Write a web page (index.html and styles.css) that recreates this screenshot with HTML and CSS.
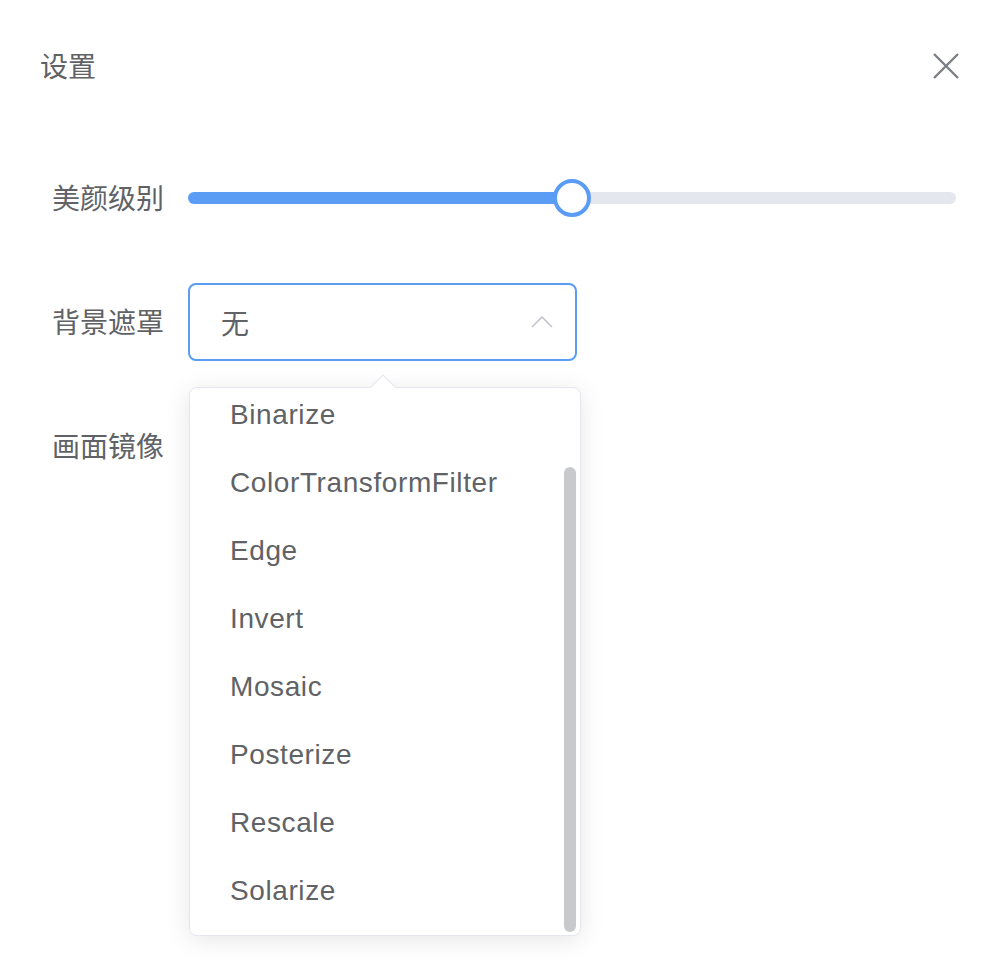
FILE: index.html
```html
<!DOCTYPE html>
<html lang="zh">
<head>
<meta charset="utf-8">
<title>设置</title>
<link rel="stylesheet" href="styles.css">
</head>
<body>
<div class="dialog">
  <div class="header">
    <span class="title">设置</span>
    <svg class="close" viewBox="0 0 26 26" width="26" height="26"><path d="M1 1 L25 25 M25 1 L1 25" stroke="#7b7e84" stroke-width="2.4" fill="none"/></svg>
  </div>
  <div class="form">
    <div class="row">
      <div class="label">美颜级别</div>
      <div class="content">
        <div class="runway">
          <div class="fill" style="width:384px"></div>
          <div class="thumb" style="left:384px"></div>
        </div>
      </div>
    </div>
    <div class="row">
      <div class="label">背景遮罩</div>
      <div class="content">
        <div class="select">
          <span class="value">无</span>
          <svg class="chevron" viewBox="0 0 22 12" width="22" height="12"><path d="M1 11 L11 1 L21 11" stroke="#c0c4cc" stroke-width="1.6" fill="none"/></svg>
          <div class="dropdown">
            <div class="arrow"></div>
            <div class="wrap">
              <ul class="list">
                <li>Binarize</li>
                <li>ColorTransformFilter</li>
                <li>Edge</li>
                <li>Invert</li>
                <li>Mosaic</li>
                <li>Posterize</li>
                <li>Rescale</li>
                <li>Solarize</li>
              </ul>
            </div>
            <div class="scrollbar"></div>
          </div>
        </div>
      </div>
    </div>
    <div class="row">
      <div class="label">画面镜像</div>
      <div class="content"></div>
    </div>
  </div>
</div>
</body>
</html>
```

FILE: styles.css
```css
* { box-sizing: border-box; }
html, body {
  margin: 0;
  padding: 0;
  background: #ffffff;
}
body {
  font-family: "Liberation Sans", "Noto Sans CJK SC", sans-serif;
  color: #606266;
  width: 1004px;
  height: 966px;
  overflow: hidden;
}
.dialog {
  width: 1004px;
}
.header {
  display: flex;
  align-items: center;
  justify-content: space-between;
  padding: 44px 45px 0 40px;
  height: 91px;
}
.title {
  font-size: 28px;
  line-height: 48px;
  color: #606266;
}
.close {
  display: block;
  margin-top: -3px;
}
.form {
  margin-top: 67px;
  padding: 0 48px 0 40px;
  display: flex;
  flex-direction: column;
  gap: 44px;
}
.row {
  display: flex;
  align-items: center;
  height: 80px;
}
.label {
  width: 148px;
  padding-right: 24px;
  padding-top: 3px;
  text-align: right;
  font-size: 28px;
  line-height: 80px;
  color: #606266;
  flex: none;
}
.content {
  flex: 1;
  display: flex;
  align-items: center;
  height: 80px;
}
.runway {
  position: relative;
  width: 100%;
  height: 12px;
  border-radius: 6px;
  background: #e4e7ed;
}
.fill {
  height: 12px;
  border-radius: 6px;
  background: #5b9cf5;
}
.thumb {
  position: absolute;
  top: 50%;
  width: 38px;
  height: 38px;
  margin: -19px 0 0 -19px;
  border: 4px solid #5b9cf5;
  border-radius: 50%;
  background: #ffffff;
}
.select {
  position: relative;
  width: 389px;
  height: 78px;
  border: 2px solid #5b9cf5;
  border-radius: 8px;
  display: flex;
  align-items: center;
  justify-content: space-between;
  padding: 0 22px 0 31px;
}
.value {
  font-size: 28px;
  color: #606266;
}
.chevron {
  display: block;
}
.dropdown {
  position: absolute;
  top: 102px;
  left: -1px;
  width: 392px;
  height: 549px;
  background: #ffffff;
  border: 1px solid #e4e7ed;
  border-radius: 8px;
  box-shadow: 0 4px 24px rgba(0, 0, 0, 0.1);
  z-index: 10;
}
.arrow {
  position: absolute;
  top: -10px;
  left: 184px;
  width: 18px;
  height: 18px;
  background: #ffffff;
  border-top: 1px solid #e4e7ed;
  border-left: 1px solid #e4e7ed;
  transform: rotate(45deg);
  z-index: 1;
}
.wrap {
  position: relative;
  height: 547px;
  overflow: hidden;
  border-radius: 8px;
  z-index: 2;
}
.list {
  list-style: none;
  margin: -7px 0 0 0;
  padding: 0;
}
.list li {
  height: 68px;
  line-height: 68px;
  padding: 0 40px;
  font-size: 28px;
  letter-spacing: 0.6px;
  color: #606266;
  white-space: nowrap;
}
.scrollbar {
  position: absolute;
  top: 79px;
  right: 4px;
  width: 12px;
  height: 465px;
  border-radius: 6px;
  background: #c8c9cc;
  z-index: 3;
}
```
